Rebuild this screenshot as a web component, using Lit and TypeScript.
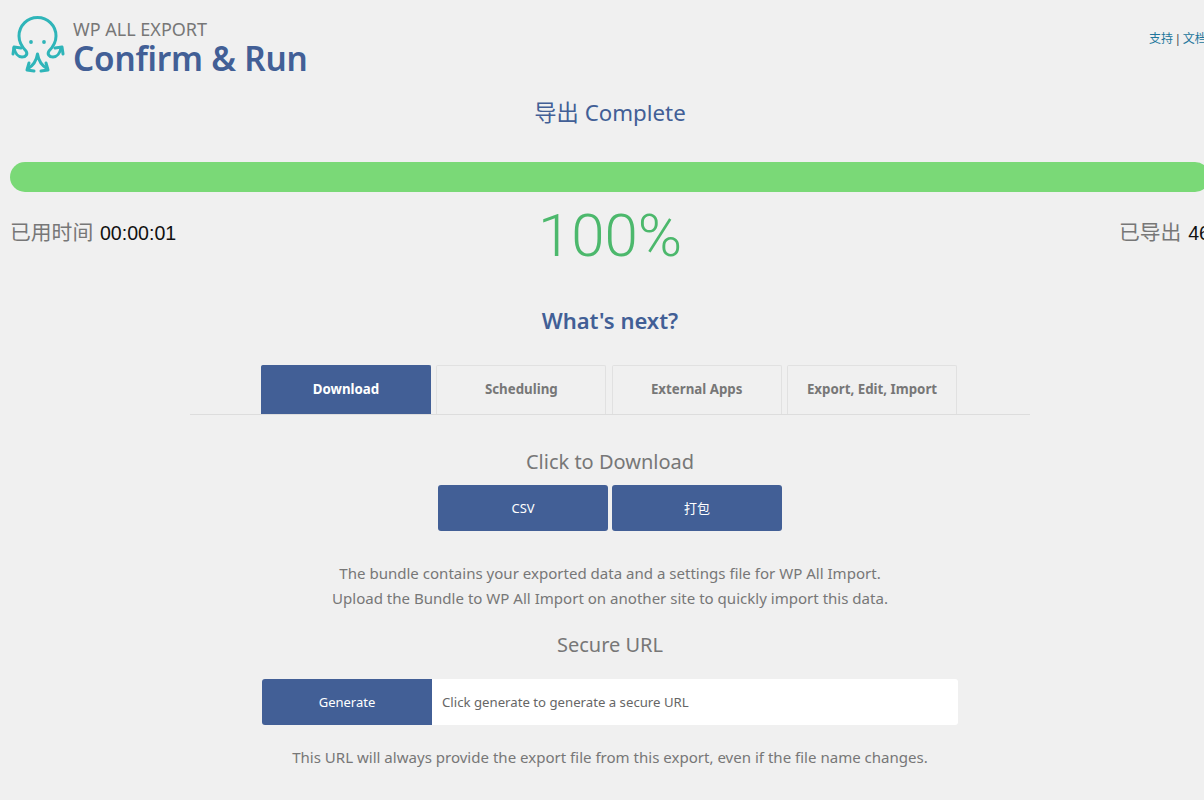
import { LitElement, html, css } from "lit";
import { customElement } from "lit/decorators.js";

@customElement("app-root")
export class AppRoot extends LitElement {
  static styles = css`
    :host {
      display: block;
      width: 1204px;
      height: 800px;
      overflow: hidden;
      background: #f0f0f0;
      font-family: "Noto Sans", "Noto Sans CJK SC", sans-serif;
      color: #777;
    }
    .wrap { width: 1200px; margin-left: 10px; display: flex; flex-direction: column; }
    .head { height: 86px; display: flex; justify-content: space-between; }
    .brand { display: flex; gap: 5px; padding-top: 8px; }
    .logo { width: 58px; height: 66px; flex: none; display: block; }
    .titles { display: flex; flex-direction: column; padding-top: 11px; }
    .eyebrow { font-size: 18px; line-height: 21px; color: #777; }
    .title { font-size: 33.300px; line-height: 36px; font-weight: 600; color: #425f96; letter-spacing: -0.2px; }
    .links { font-family: "Liberation Sans", "Noto Sans CJK SC", sans-serif; font-size: 12px; line-height: 16px; padding-top: 31px; width: 61px; white-space: nowrap; color: #555; }
    .links a { color: #21759b; text-decoration: none; }
    .status { text-align: center; font-size: 22.300px; line-height: 30px; color: #425f96; height: 30px; margin-top: 12px; }
    .bar { height: 30px; margin-top: 34px; border-radius: 15px; background: #7ad977; }
    .stats { display: grid; grid-template-columns: 1fr auto 1fr; height: 84px; }
    .stat { font-family: "Liberation Sans", "Noto Sans CJK SC", sans-serif; font-size: 20.800px; line-height: 26px; padding-top: 28px; color: #777; white-space: nowrap; word-spacing: 1px; }
    .stat.right { text-align: right; }
    .stat b { font-weight: 400; font-size: 19.600px; color: #111; }
    .pct { font-family: Roboto, sans-serif; font-size: 60px; font-weight: 300; line-height: 84px; padding-top: 2px; height: 82px; color: #4cb86c; }
    .next { text-align: center; font-size: 22px; line-height: 30px; font-weight: 600; color: #425f96; margin-top: 29px; }
    .tabs { width: 838px; padding-right: 2px; height: 49px; align-self: center; margin-top: 30px; display: flex; justify-content: center; gap: 5.330px; border-bottom: 1px solid #ddd; }
    .tab { width: 170px; height: 49px; box-sizing: border-box; display: flex; align-items: center; justify-content: center; padding-bottom: 2px; border: 1px solid #e1e1e1; border-bottom: none; border-radius: 2px 2px 0 0; font-size: 13.300px; font-weight: 700; color: #777; }
    .tab.on { background: #425f96; border-color: #425f96; color: #fff; }
    .h3 { text-align: center; font-size: 20px; line-height: 28px; color: #777; }
    .dl { margin-top: 33px; }
    .btns { display: flex; justify-content: center; gap: 4px; margin-top: 9px; }
    .btn { width: 170px; height: 46px; background: #425f96; color: #fff; font-size: 13px; border-radius: 3px; display: flex; align-items: center; justify-content: center; }
    .cjk { padding-bottom: 2px; box-sizing: border-box; }
    .p { text-align: center; font-size: 15.050px; line-height: 25px; color: #777; }
    .bundle { margin-top: 30px; }
    .secure { margin-top: 20px; }
    .url { display: flex; width: 696px; align-self: center; margin-top: 20px; }
    .url .btn { border-radius: 3px 0 0 3px; flex: none; }
    .field { flex: 1; background: #fff; border-radius: 0 3px 3px 0; display: flex; align-items: center; padding-left: 10px; font-size: 13.200px; color: #666; }
    .note { margin-top: 20px; }
  `;

  render() {
    return html`<div class="wrap">
      <div class="head">
        <div class="brand">
          <svg class="logo" viewBox="10 8 58 66" fill="none" stroke="#2fb5b9" stroke-width="3" stroke-linecap="round" stroke-linejoin="round">
            <path d="M14 48c1 5 4 9 8 9 4 0 6-3 4-6-4-4-7-10-7-15a18.500 18.500 0 0 1 37 0c0 5-3 11-7 15-2 3 0 6 4 6 4 0 7-4 8-9"/>
            <path d="M13 54l1-7 7 1M55 48l7-1 1 7"/>
            <path d="M37.500 54c-1 7-5 12-10 15M37.500 54c1 7 5 12 10 15"/>
            <path d="M29 63l-2 7 7 1M46 63l2 7-7 1"/>
            <circle cx="31" cy="42" r="1.900" fill="#2fb5b9" stroke="none"/>
            <circle cx="44" cy="42" r="1.900" fill="#2fb5b9" stroke="none"/>
          </svg>
          <div class="titles">
            <div class="eyebrow">WP ALL EXPORT</div>
            <div class="title">Confirm &amp; Run</div>
          </div>
        </div>
        <div class="links"><a>支持</a> | <a>文档</a></div>
      </div>
      <div class="status">导出 Complete</div>
      <div class="bar"></div>
      <div class="stats">
        <div class="stat">已用时间 <b>00:00:01</b></div>
        <div class="pct">100%</div>
        <div class="stat right">已导出 <b>46</b></div>
      </div>
      <div class="next">What's next?</div>
      <div class="tabs">
        <div class="tab on">Download</div>
        <div class="tab">Scheduling</div>
        <div class="tab">External Apps</div>
        <div class="tab">Export, Edit, Import</div>
      </div>
      <div class="h3 dl">Click to Download</div>
      <div class="btns"><div class="btn">CSV</div><div class="btn cjk">打包</div></div>
      <div class="p bundle">The bundle contains your exported data and a settings file for WP All Import.<br />Upload the Bundle to WP All Import on another site to quickly import this data.</div>
      <div class="h3 secure">Secure URL</div>
      <div class="url"><div class="btn">Generate</div><div class="field">Click generate to generate a secure URL</div></div>
      <div class="p note">This URL will always provide the export file from this export, even if the file name changes.</div>
    </div>`;
  }
}
